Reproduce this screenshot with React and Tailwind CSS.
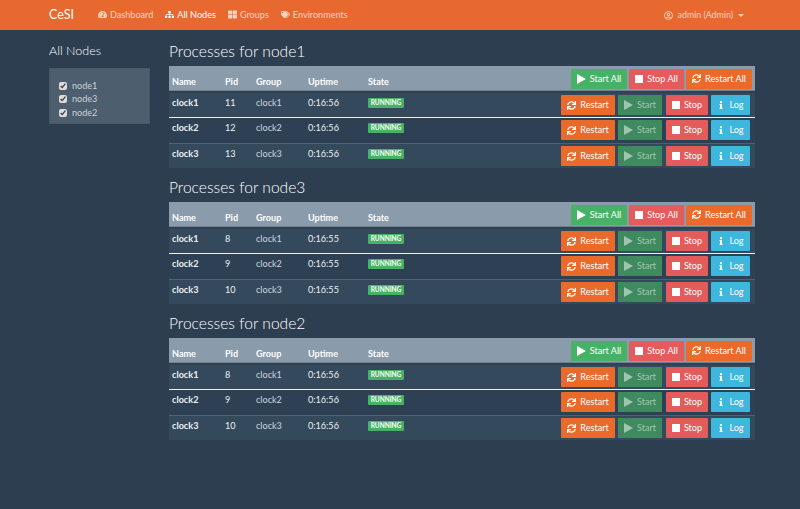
import React from "react";
import { FaTachometerAlt, FaSitemap, FaThLarge, FaTags, FaRegUserCircle, FaSync, FaInfo } from "react-icons/fa";

const sections = [
  { node: "node1", pids: [11, 12, 13], uptime: "0:16:56" },
  { node: "node3", pids: [8, 9, 10], uptime: "0:16:55" },
  { node: "node2", pids: [8, 9, 10], uptime: "0:16:56" },
];

const rowStyles = [
  "bg-[#35495c] border-t-2 border-[#2f4153] pb-[2px]",
  "bg-[#2e4054] border-t border-[#ecf0f1] pb-[3px]",
  "bg-[#35495c] border-t border-[#4f6172] pb-[2px]",
];

function PlayIcon({ dim }) {
  return (
    <svg width="9" height="10" viewBox="0 0 9 10" className={dim ? "opacity-50" : ""}>
      <polygon points="0,0 9,5 0,10" fill="#fff" />
    </svg>
  );
}

function StopIcon() {
  return (
    <svg width="8" height="8" viewBox="0 0 8 8">
      <rect width="8" height="8" fill="#fff" />
    </svg>
  );
}

function NavLink({ icon, label, active }) {
  return (
    <a className={"flex items-center gap-[3px] " + (active ? "text-white" : "text-[#f7d3c0]")}>
      {icon}
      <span>{label}</span>
    </a>
  );
}

function Btn({ color, icon, label, width }) {
  return (
    <button className={"h-5 flex items-center justify-center gap-[4px] text-[9.1px] font-normal text-white rounded-[1px] " + color + " " + width}>
      {icon}
      <span>{label}</span>
    </button>
  );
}

function Section({ node, pids, uptime }) {
  return (
    <section>
      <h3 className="h-[34px] pt-[7px] text-[15.6px] font-light leading-[24px] text-white">Processes for {node}</h3>
      <div className="h-[25px] flex items-center justify-between bg-[#8a9bab] border-b border-[#6f8192] pl-[3px] pr-[3px] pt-[1px] text-[9.1px] font-bold text-white">
        <div className="grid grid-cols-[53px_31px_52px_60px_60px] pt-[7px]">
          <span>Name</span>
          <span>Pid</span>
          <span>Group</span>
          <span>Uptime</span>
          <span>State</span>
        </div>
        <div className="flex gap-[2px]">
          <Btn color="bg-[#47b266]" width="w-[56px]" label="Start All" icon={<PlayIcon />} />
          <Btn color="bg-[#e35b5a]" width="w-[55px]" label="Stop All" icon={<StopIcon />} />
          <Btn color="bg-[#ea6a2c]" width="w-[66px]" label="Restart All" icon={<FaSync className="text-[9px]" />} />
        </div>
      </div>
      {pids.map((pid, i) => (
        <div key={pid} className={"flex justify-between pl-[3px] pr-[5px] pt-[2px] " + rowStyles[i]}>
          <div className="grid grid-cols-[53px_31px_52px_60px_60px] items-center h-[12px] mt-[1px] text-[9.1px] text-[#ecf0f1]">
            <span className="font-bold">clock{i + 1}</span>
            <span>{pid}</span>
            <span className="text-[#c8d6e0]">clock{i + 1}</span>
            <span>{uptime}</span>
            <span className="w-[36px] h-[10px] flex items-center justify-center bg-[#47b266] text-white text-[6.5px] font-bold leading-none rounded-[1px]">RUNNING</span>
          </div>
          <div className="flex gap-[3px]">
            <Btn color="bg-[#ea6a2c]" width="w-[54px]" label="Restart" icon={<FaSync className="text-[9px]" />} />
            <Btn color="bg-[#3f8a5f] !text-white/50" width="w-[44px] mr-[1px]" label="Start" icon={<PlayIcon dim />} />
            <Btn color="bg-[#e35b5a]" width="w-[42px]" label="Stop" icon={<StopIcon />} />
            <Btn color="bg-[#3fb6dc]" width="w-[39px]" label="Log" icon={<FaInfo className="text-[8px]" />} />
          </div>
        </div>
      ))}
    </section>
  );
}

export default function App() {
  return (
    <div className="min-h-[509px] bg-[#2c3e50] font-['Lato',sans-serif] text-[#ecf0f1]">
      <nav className="h-[30px] flex items-center justify-between bg-[#e8692f] pl-[49px] pr-[56px] text-[9.1px]">
        <div className="flex items-center">
          <span className="w-[24px] text-[12.5px] text-white mr-[25px]">CeSI</span>
          <div className="flex items-center gap-[12px]">
            <NavLink label="Dashboard" icon={<FaTachometerAlt className="text-[9px]" />} />
            <NavLink label="All Nodes" active icon={<FaSitemap className="text-[9px]" />} />
            <NavLink label="Groups" icon={<FaThLarge className="text-[9px]" />} />
            <NavLink label="Environments" icon={<FaTags className="text-[9px]" />} />
          </div>
        </div>
        <div className="flex items-center gap-[5px] text-[#f7d3c0]">
          <FaRegUserCircle className="text-[9px]" />
          <span className="text-[8.8px]">admin (Admin)</span>
          <span className="w-0 h-0 border-x-[3px] border-x-transparent border-t-[3px] border-t-[#f7d3c0]"></span>
        </div>
      </nav>
      <div className="flex pl-[49px] gap-[19px]">
        <aside className="w-[101px] pt-[13px]">
          <h4 className="h-[25px] text-[12.5px] font-light leading-[16px] text-white">All Nodes</h4>
          <div className="h-[56px] bg-[#4d5e6e] border border-[#475868] pl-[9px] pt-[10px] text-[9.1px] text-[#c9d2d9]">
            {["node1", "node3", "node2"].map((n) => (
              <label key={n} className="h-[13.5px] flex items-center gap-[5px]">
                <input type="checkbox" defaultChecked className="w-[8px] h-[8px] accent-[#dddddd]" />
                {n}
              </label>
            ))}
          </div>
        </aside>
        <main className="w-[586px] mt-[2px]">
          {sections.map((s) => (
            <Section key={s.node} {...s} />
          ))}
        </main>
      </div>
    </div>
  );
}
